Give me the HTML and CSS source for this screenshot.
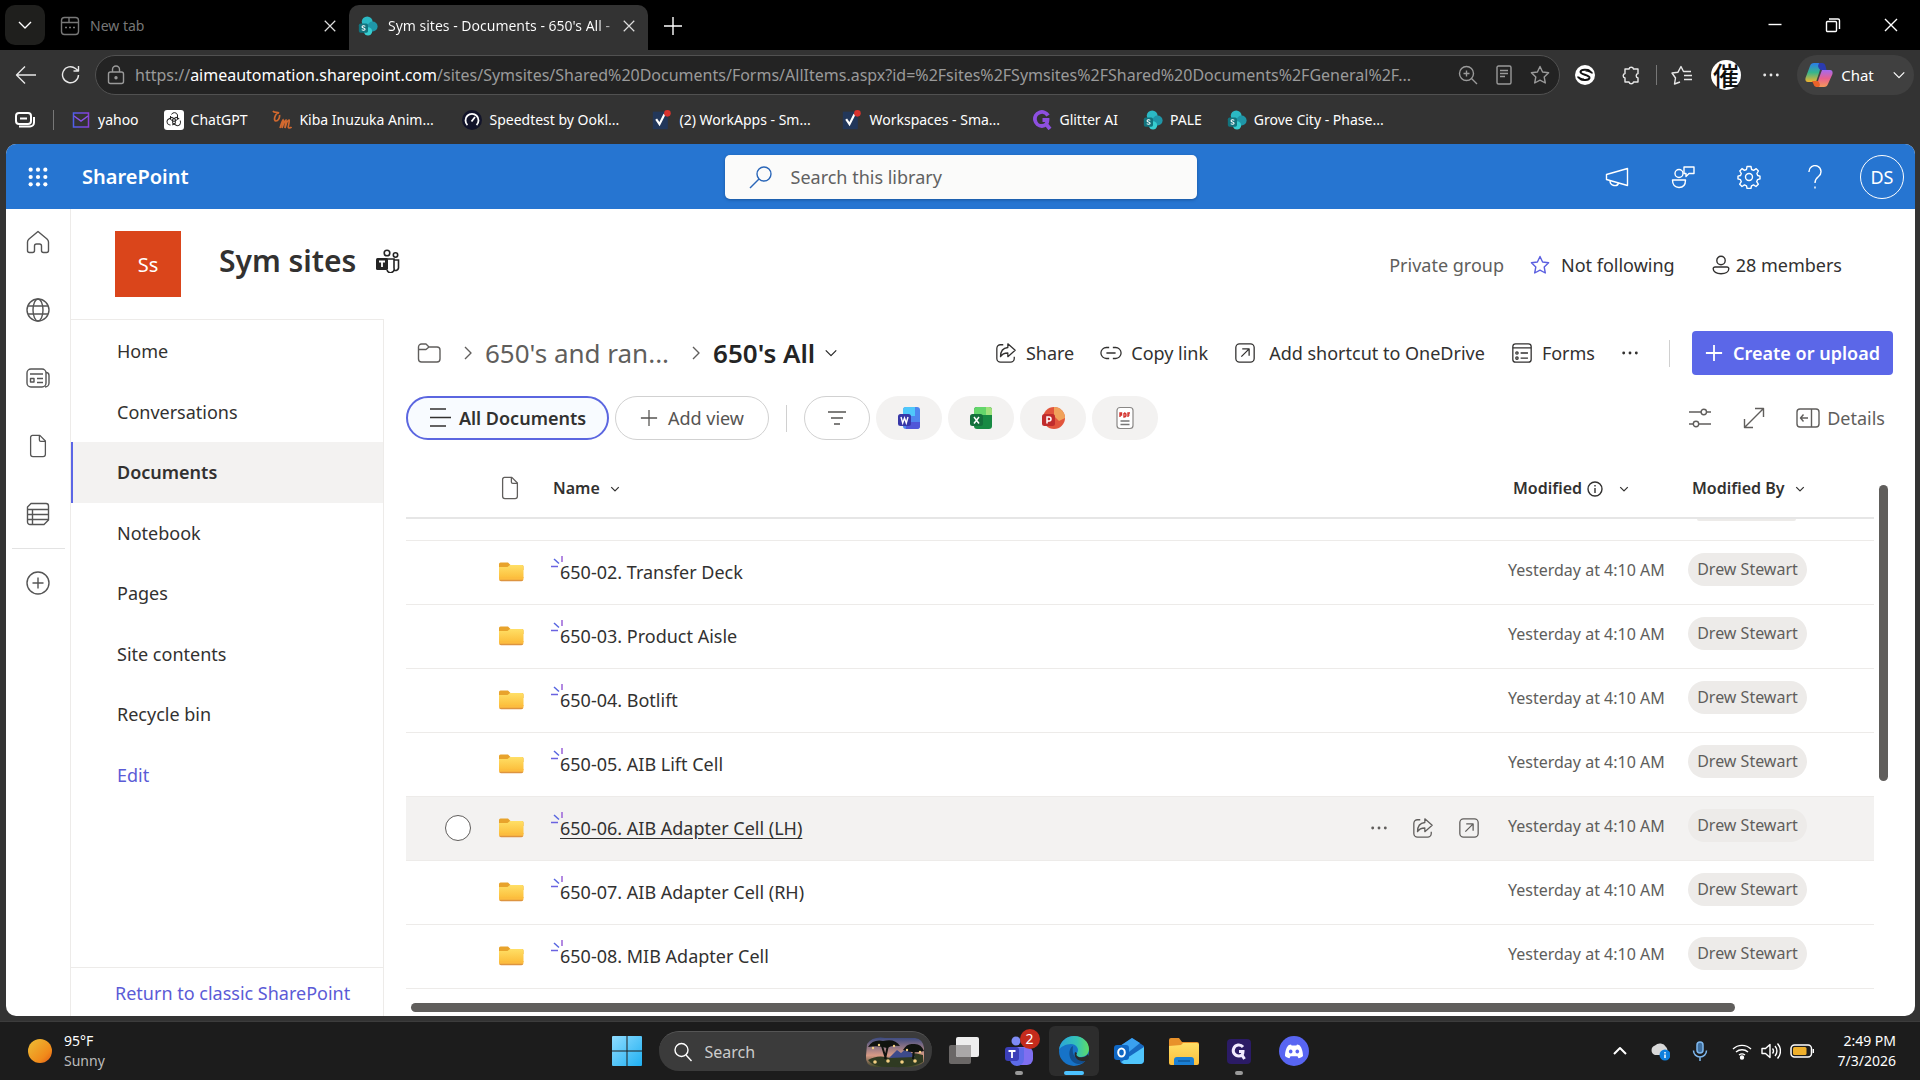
FILE: index.html
```html
<!DOCTYPE html>
<html lang="en">
<head>
<meta charset="utf-8">
<title>Sym sites - Documents - 650's All</title>
<link rel="stylesheet" href="styles.css">
</head>
<body>
<svg class="defs" aria-hidden="true">
  <defs>
    <linearGradient id="g-folder" x1="0" y1="0" x2="0" y2="1"><stop offset="0" stop-color="#ffdf66"/><stop offset="1" stop-color="#fcbf3c"/></linearGradient>
    <linearGradient id="g-sun" x1="0" y1="0" x2="1" y2="1"><stop offset="0.2" stop-color="#eeb02e"/><stop offset="0.7" stop-color="#f18a1a"/><stop offset="1" stop-color="#e0561a"/></linearGradient>
    <linearGradient id="g-win" x1="0" y1="0" x2="1" y2="1"><stop offset="0" stop-color="#8fdcff"/><stop offset="1" stop-color="#1fb0f2"/></linearGradient>
    <linearGradient id="g-edge" x1="0" y1="0" x2="1" y2="0"><stop offset="0" stop-color="#2aa5dc"/><stop offset="0.6" stop-color="#35c4b4"/><stop offset="1" stop-color="#5fdc66"/></linearGradient>
    <linearGradient id="g-cop1" x1="0" y1="0" x2="0" y2="1"><stop offset="0" stop-color="#2a7de8"/><stop offset="0.5" stop-color="#37b58c"/><stop offset="1" stop-color="#f2b32c"/></linearGradient>
    <linearGradient id="g-cop2" x1="0" y1="0" x2="0" y2="1"><stop offset="0" stop-color="#a46bf0"/><stop offset="0.5" stop-color="#e8608f"/><stop offset="1" stop-color="#f49a58"/></linearGradient>
    <linearGradient id="g-sky" x1="0" y1="0" x2="0" y2="1"><stop offset="0" stop-color="#3c4b82"/><stop offset="0.6" stop-color="#d79a86"/><stop offset="1" stop-color="#3b4426"/></linearGradient>
    <linearGradient id="g-mail" x1="0" y1="0" x2="1" y2="0"><stop offset="0" stop-color="#4f5fe8"/><stop offset="1" stop-color="#8a3fd8"/></linearGradient>
  </defs>
  <symbol id="i-down" viewBox="0 0 16 16"><path d="M2 5l6 6 6-6"/></symbol>
  <symbol id="i-right" viewBox="0 0 16 16"><path d="M5 2l6 6-6 6"/></symbol>
  <symbol id="i-x" viewBox="0 0 16 16"><path d="M2 2l12 12M14 2L2 14"/></symbol>
  <symbol id="i-plus" viewBox="0 0 20 20"><path d="M10 1v18M1 10h18"/></symbol>
  <symbol id="i-dots" viewBox="0 0 20 20"><g fill="currentColor" stroke="none"><circle cx="3" cy="10" r="1.6"/><circle cx="10" cy="10" r="1.6"/><circle cx="17" cy="10" r="1.6"/></g></symbol>
  <symbol id="i-star" viewBox="0 0 20 20"><path d="M10 1.500l2.600 5.500 6 .8-4.400 4.200 1.100 6L10 15.200l-5.300 2.800 1.100-6L1.400 7.800l6-.8z"/></symbol>
  <symbol id="i-share" viewBox="0 0 24 24"><path d="M9 3H6a4 4 0 0 0-4 4v11a4 4 0 0 0 4 4h11a4 4 0 0 0 4-4v-2"/><path d="M14 2l8 7-8 7v-4c-4 0-6.500 1.500-8 4 0-6 3-9.500 8-10z"/></symbol>
  <symbol id="i-shortcut" viewBox="0 0 24 24"><rect x="2" y="2" width="20" height="20" rx="4"/><path d="M8 16l8-8M9 7.500h7.500V15"/></symbol>
  <symbol id="i-file" viewBox="0 0 20 26"><path d="M4 1.500h8l6 6V22a2.500 2.500 0 0 1-2.500 2.500h-11A2.500 2.500 0 0 1 2 22V3.500a2 2 0 0 1 2-2z"/><path d="M11.500 2v4.500A1.500 1.500 0 0 0 13 8h5"/></symbol>
  <symbol id="i-sp" viewBox="0 0 24 24"><circle cx="11" cy="7" r="6.500" fill="#2bb9c4"/><circle cx="17.500" cy="12.500" r="6" fill="#1f96a8"/><circle cx="12" cy="18.500" r="5" fill="#37cdd0"/><rect x="1" y="9" width="11" height="11" rx="2" fill="#12737d"/><path d="M8.800 12.500c-1.500-1.200-4-.9-3.900.6.100 1.600 3.600 1 3.600 2.800 0 1.500-2.500 1.600-4 .5" stroke="#fff" stroke-width="1.300" fill="none"/></symbol>
  <symbol id="i-check" viewBox="0 0 22 24"><rect x="0" y="2" width="18" height="21" fill="#22375a"/><path d="M4 11l4 6 6-12" stroke="#fff" stroke-width="2.600" fill="none"/><circle cx="17.500" cy="4" r="4" fill="#d8322c"/></symbol>
  <symbol id="i-folder" viewBox="0 0 26 20"><path d="M1 2a1.500 1.500 0 0 1 1.500-1.500H10L12.500 3H24a1.500 1.500 0 0 1 1.500 1.500V8H1z" fill="#e8a32c"/><path d="M1 5h8.500L12 3h12a1.500 1.500 0 0 1 1.500 1.500V16H1z" fill="url(#g-folder)"/><path d="M1 15h24.500v2a2 2 0 0 1-2 2H3a2 2 0 0 1-2-2z" fill="#fcbd3f"/><path d="M1.300 17.800a2 2 0 0 0 1.700 1.500h20.500a2 2 0 0 0 1.700-1.500z" fill="#dd9440"/></symbol>
  <symbol id="i-new" viewBox="0 0 12 12"><path d="M11 0v6" stroke="#9a62d8"/><path d="M3 3l5 4.500" stroke="#5765e0"/><path d="M0 10.500h7" stroke="#6a63e0"/></symbol>
</svg>

<header class="tabstrip">
  <button class="tabmenu" aria-label="Tab actions"><svg class="ic s16"><use href="#i-down"/></svg></button>
  <div class="tab">
    <svg class="ic s20" viewBox="0 0 20 20"><rect x="1.500" y="1.500" width="17" height="17" rx="3"/><path d="M1.500 6.500H9V2M9 6.500h9.500"/><path d="M5 11.500h2M9 11.500h2M13 11.500h2"/></svg>
    <span class="tabname">New tab</span>
    <button class="tabclose" aria-label="Close tab"><svg class="ic s14"><use href="#i-x"/></svg></button>
  </div>
  <div class="tab active">
    <svg class="s20"><use href="#i-sp"/></svg>
    <span class="tabname">Sym sites - Documents - 650's All -</span>
    <button class="tabclose" aria-label="Close tab"><svg class="ic s14"><use href="#i-x"/></svg></button>
  </div>
  <button class="newtab" aria-label="New tab"><svg class="ic s20"><use href="#i-plus"/></svg></button>
  <div class="winbtns">
    <button aria-label="Minimize"><svg class="ic s16" viewBox="0 0 16 16"><path d="M1.500 7.500h13"/></svg></button>
    <button aria-label="Restore"><svg class="ic s16" viewBox="0 0 16 16"><rect x="1.500" y="4.500" width="10" height="10" rx="1"/><path d="M4 2h9a1.500 1.500 0 0 1 1.500 1.500V12"/></svg></button>
    <button aria-label="Close"><svg class="ic s16"><use href="#i-x"/></svg></button>
  </div>
</header>

<div class="toolbar">
  <button aria-label="Back"><svg class="ic s22" viewBox="0 0 22 22"><path d="M21 11H2M10 2.500L1.500 11l8.500 8.500"/></svg></button>
  <button aria-label="Refresh"><svg class="ic s20" viewBox="0 0 20 20"><path d="M17.500 10A8 8 0 1 1 14.500 3.500L17.500 6M17.500 1v5h-5"/></svg></button>
  <div class="address">
    <svg class="ic s20" viewBox="0 0 20 20"><rect x="2.500" y="7" width="15" height="11.500" rx="2"/><path d="M6.500 7V4.500a3.500 3.500 0 0 1 7 0V7"/><circle cx="10" cy="12.700" r="1" fill="currentColor"/></svg>
    <span class="url">https://<b>aimeautomation.sharepoint.com</b>/sites/Symsites/Shared%20Documents/Forms/AllItems.aspx?id=%2Fsites%2FSymsites%2FShared%20Documents%2FGeneral%2F...</span>
    <button aria-label="Zoom"><svg class="ic s20" viewBox="0 0 20 20"><circle cx="8.500" cy="8.500" r="7"/><path d="M13.500 13.500l5.500 5.500M8.500 5.500v6M5.500 8.500h6"/></svg></button>
    <button aria-label="Reader"><svg class="ic s20" viewBox="0 0 20 20"><rect x="3" y="1" width="14" height="18" rx="1.500"/><path d="M6 5.500h8M6 8.500h8M6 11.500h5"/></svg></button>
    <button aria-label="Favourite"><svg class="ic s20"><use href="#i-star"/></svg></button>
  </div>
  <button class="ext" aria-label="S extension"><svg class="s20" viewBox="0 0 20 20"><circle cx="10" cy="10" r="10" fill="#fff"/><path d="M15 6c-2-1.500-9-2-9.500.8C5 10 15 9.500 14.500 13c-.5 2.500-7 2.500-9.500 1M17 8.500c0-1-3-3-6.500-3M3 11.500c0 1 3 3 6 3" stroke="#111" stroke-width="2" fill="none"/></svg></button>
  <button class="puzzle" aria-label="Extensions"><svg class="ic s20" viewBox="0 0 20 20"><path d="M4 4h4a2.300 2.300 0 0 1 4.500 0H17v4.500a2.300 2.300 0 0 0 0 4.500V17h-4.500a2.300 2.300 0 0 1-4.500 0H4v-4a2.300 2.300 0 0 1 0-4.500z"/></svg></button>
  <span class="vsep"></span>
  <button class="favs" aria-label="Favourites"><svg class="ic s22" viewBox="0 0 22 20"><path d="M9 17l-5.500 2 1-6L1 8l6-.8L10 1.500l2.500 5H20M13 10.500h8M13 14.500h8"/></svg></button>
  <button class="profile" aria-label="Profile">催</button>
  <button class="more" aria-label="Menu"><svg class="ic s18"><use href="#i-dots"/></svg></button>
  <button class="chat"><svg class="s28" viewBox="0 0 28 26"><path d="M9 1h8l-3 10-3 9H3c-2 0-3-1.500-2.500-4L5 4c.6-2 2-3 4-3z" fill="url(#g-cop1)"/><path d="M14 1h3c2 0 3 1 3.500 3l1 4h-5c-2 0-3-2-3.500-4z" fill="#2b3bb0"/><path d="M19 25h-8l3-9 3-8h8c2 0 3 1.500 2.500 4L23 22c-.6 2-2 3-4 3z" fill="url(#g-cop2)"/><path d="M14 25h-2c-2 0-3-1-3.500-3L7 19h5c2 0 2.500 2 3 4z" fill="#e8622a"/></svg><span>Chat</span><svg class="ic s14"><use href="#i-down"/></svg></button>
</div>

<nav class="bookmarks" aria-label="Bookmarks">
  <button aria-label="Workspaces"><svg class="ic s20 thick" viewBox="0 0 20 20"><rect x="1" y="3" width="15" height="11" rx="3"/><path d="M5 8.500h7M4 16.500h11a4 4 0 0 0 4-4V7"/></svg></button>
  <span class="vsep"></span>
  <a href="#"><svg class="s20" viewBox="0 0 20 20"><rect x="2.500" y="3" width="15" height="14" fill="none" stroke="url(#g-mail)" stroke-width="1.500"/><path d="M3 6l7 5 7-5" fill="none" stroke="#8b52e8" stroke-width="1.500"/></svg>yahoo</a>
  <a href="#"><svg class="s20" viewBox="0 0 20 20"><rect width="20" height="20" rx="3" fill="#fff"/><g fill="none" stroke="#222" stroke-width="1"><path d="M7.500 4.500a3.200 3.200 0 0 1 6 .5v4.500l-3.500 2-3.500-2V6"/><path d="M7.500 4.500a3.200 3.200 0 0 1 6 .5v4.500l-3.500 2-3.500-2V6" transform="rotate(120 10 10)"/><path d="M7.500 4.500a3.200 3.200 0 0 1 6 .5v4.500l-3.500 2-3.500-2V6" transform="rotate(240 10 10)"/></g></svg>ChatGPT</a>
  <a href="#" class="long"><svg class="s20" viewBox="0 0 20 20"><path d="M1 1c1 2 4 1 6 2-4 0-6 8-3 8 2 0 4-3 3.500-6M8 18c1-3 2-7 3-8 1 2-.5 5-1 8 1-3 2.500-8 4-8 0 3-1 5-1 8 1-3 2-8 4-8 1 2-2 8 0 8 1 0 2 0 2.500-1" fill="none" stroke="#d2692f" stroke-width="1.700"/></svg>Kiba Inuzuka Anim...</a>
  <a href="#" class="long"><svg class="s20" viewBox="0 0 20 20"><circle cx="10" cy="10" r="10" fill="#12142a"/><path d="M5.500 15a6.500 6.500 0 1 1 9 0M9.500 11.500L13 7" fill="none" stroke="#fff" stroke-width="1.800"/></svg>Speedtest by Ookl...</a>
  <a href="#" class="long"><svg class="s20"><use href="#i-check"/></svg>(2) WorkApps - Sm...</a>
  <a href="#" class="long"><svg class="s20"><use href="#i-check"/></svg>Workspaces - Sma...</a>
  <a href="#"><svg class="s20" viewBox="0 0 20 20"><path d="M16 5.500A7 7 0 1 0 10 16c3 0 5.500-2 5.500-6h-5M14 14l4 5" fill="none" stroke="#8d4fe0" stroke-width="3.800"/></svg>Glitter AI</a>
  <a href="#"><svg class="s20"><use href="#i-sp"/></svg>PALE</a>
  <a href="#" class="long"><svg class="s20"><use href="#i-sp"/></svg>Grove City - Phase...</a>
</nav>

<div class="page">
  <div class="suite">
    <button class="waffle" aria-label="App launcher"><svg class="s22" viewBox="0 0 24 24" fill="#fff"><circle cx="4" cy="4" r="2.300"/><circle cx="12" cy="4" r="2.300"/><circle cx="20" cy="4" r="2.300"/><circle cx="4" cy="12" r="2.300"/><circle cx="12" cy="12" r="2.300"/><circle cx="20" cy="12" r="2.300"/><circle cx="4" cy="20" r="2.300"/><circle cx="12" cy="20" r="2.300"/><circle cx="20" cy="20" r="2.300"/></svg></button>
    <a class="brand" href="#">SharePoint</a>
    <label class="search"><svg class="ic s24" viewBox="0 0 24 24"><circle cx="15" cy="9" r="7"/><path d="M10 14L1 23"/></svg><input type="search" placeholder="Search this library" aria-label="Search this library"></label>
    <div class="suiteicons">
      <button aria-label="News"><svg class="ic s24" viewBox="0 0 24 24"><path d="M1.500 9.500L22.500 3.500v17l-21-6z"/><path d="M5 15.500c0 6 7.500 6.500 8.500 2.500"/></svg></button>
      <button aria-label="Feedback"><svg class="ic s24" viewBox="0 0 24 24"><circle cx="8" cy="8.500" r="4"/><path d="M1.500 15h13c0 5-2.500 7.500-6.500 7.500S1.500 20 1.500 15zM13 2h10v6.500h-5l-3 3v-3h-2z"/></svg></button>
      <button aria-label="Settings"><svg class="ic s24" viewBox="0 0 24 24"><circle cx="12" cy="12" r="3.500"/><path d="M10 1.500h4l.6 3 2 .8 2.600-1.700 2.200 2.400-1.500 2.500.8 2 2.300.7v2.700l-2.500.8-.8 2 1.600 2.500-2.300 2.300-2.500-1.600-2 .9-.6 2.700h-3.800l-.6-2.700-2-.9L5 21.500l-2.300-2.300 1.600-2.500-.8-2-2.500-.8v-2.700l2.500-.7.800-2L2.800 6 5 3.600l2.500 1.700 2-.8z"/></svg></button>
      <button aria-label="Help"><svg class="ic s24" viewBox="0 0 24 24"><path d="M6 7a6 6 0 1 1 9.500 4.500C13 13.500 12 14.500 12 18M12 21.500v2"/></svg></button>
      <button class="me">DS</button>
    </div>
  </div>

  <div class="body">
    <nav class="rail" aria-label="App bar">
      <a href="#" aria-label="Home"><svg class="ic s24" viewBox="0 0 24 24"><path d="M12 1.500L3 9c-1 1-1.500 2-1.500 3v8.500c0 1 .5 2 2 2h3c1 0 2-1 2-2V16c0-1 .5-2 2-2h3c1.500 0 2 1 2 2v4.500c0 1 1 2 2 2h3c1.500 0 2-1 2-2V12c0-1-.5-2-1.500-3z"/></svg></a>
      <a href="#" aria-label="Sites"><svg class="ic s24" viewBox="0 0 24 24"><circle cx="12" cy="12" r="11"/><ellipse cx="12" cy="12" rx="5" ry="11"/><path d="M2 8h20M2 16h20"/></svg></a>
      <a href="#" aria-label="News"><svg class="ic s24" viewBox="0 0 24 24"><rect x="1" y="3" width="19" height="18" rx="4"/><path d="M20 6.500c2 0 3 1 3 3V17a4 4 0 0 1-4 4M4 8h13M11 12.500h6M11 16.500h6"/><rect x="4.500" y="12.500" width="3.500" height="3.500"/></svg></a>
      <a href="#" aria-label="Files"><svg class="ic s24"><use href="#i-file"/></svg></a>
      <a href="#" aria-label="Lists"><svg class="ic s24" viewBox="0 0 24 24"><path d="M5 1.500h15a2.500 2.500 0 0 1 2.500 2.500v14l-4.500 4.500H4A2.500 2.500 0 0 1 1.500 20V5zM1.500 7.500h21M1.500 12.500h21M1.500 17.500h21M6.500 7.500v15"/></svg></a>
      <span class="railsep"></span>
      <a href="#" aria-label="Create"><svg class="ic s24" viewBox="0 0 24 24"><circle cx="12" cy="12" r="11"/><path d="M12 6.500v11M6.500 12h11"/></svg></a>
    </nav>

    <div class="site">
      <div class="sitehead">
        <span class="logo">Ss</span>
        <h1>Sym sites</h1>
        <svg class="teams" viewBox="0 0 24 24"><g fill="none" stroke="#242424" stroke-width="1.600"><circle cx="11" cy="4" r="2.800"/><circle cx="19.500" cy="6" r="2.200"/><path d="M10 10h8v9a3.500 3.500 0 0 1-7 2M18 11h4.500v8a3 3 0 0 1-4.500 2"/></g><rect x="0" y="9" width="12" height="12" rx="1.500" fill="#242424"/><path d="M3 12.500h6M6 12.500V18" stroke="#fff" stroke-width="1.800"/></svg>
        <div class="siteinfo">
          <span class="muted">Private group</span>
          <button class="follow"><svg class="ic s20"><use href="#i-star"/></svg>Not following</button>
          <a href="#" class="members"><svg class="ic s20" viewBox="0 0 20 20"><circle cx="10" cy="5.500" r="4.200"/><path d="M4 12h12a1.800 1.800 0 0 1 1.800 1.800c0 3-3.300 5-7.800 5s-7.800-2-7.800-5A1.800 1.800 0 0 1 4 12z"/></svg>28 members</a>
        </div>
      </div>

      <div class="columns">
        <nav class="sidenav" aria-label="Site">
          <div class="links">
            <a href="#">Home</a><a href="#">Conversations</a><a href="#" class="current">Documents</a><a href="#">Notebook</a><a href="#">Pages</a><a href="#">Site contents</a><a href="#">Recycle bin</a><a href="#" class="edit">Edit</a>
          </div>
          <a class="classic" href="#">Return to classic SharePoint</a>
        </nav>

        <main>
          <div class="cmdbar">
            <div class="crumbs">
              <a href="#" aria-label="Root"><svg class="ic s24" viewBox="0 0 24 24"><path d="M1.500 6A3 3 0 0 1 4.500 3H9l3 3h8a3 3 0 0 1 3 3v9a3 3 0 0 1-3 3H4.500a3 3 0 0 1-3-3zM1.500 8.500H9L12 6"/></svg></a>
              <svg class="ic s16"><use href="#i-right"/></svg>
              <a href="#" class="parent">650's and ran...</a>
              <svg class="ic s16"><use href="#i-right"/></svg>
              <button class="here">650's All<svg class="ic s14"><use href="#i-down"/></svg></button>
            </div>
            <div class="cmds">
              <button><svg class="ic s22"><use href="#i-share"/></svg>Share</button>
              <button><svg class="ic s22" viewBox="0 0 24 24"><path d="M10 6H7a6 6 0 0 0 0 12h3M14 6h3a6 6 0 0 1 0 12h-3M7 12h10"/></svg>Copy link</button>
              <button class="wide"><svg class="ic s22"><use href="#i-shortcut"/></svg>Add shortcut to OneDrive</button>
              <button><svg class="ic s22" viewBox="0 0 24 24"><rect x="2" y="2" width="20" height="20" rx="3"/><path d="M2 6.500h20M10.500 12h8M10.500 17.500h8"/><circle cx="6.500" cy="12" r="1.300"/><circle cx="6.500" cy="17.500" r="1.300"/></svg>Forms</button>
              <button aria-label="More"><svg class="ic s18"><use href="#i-dots"/></svg></button>
              <span class="rule"></span>
              <button class="create"><svg class="ic s18"><use href="#i-plus"/></svg>Create or upload</button>
            </div>
          </div>

          <div class="views">
            <button class="pill on"><svg class="ic s22" viewBox="0 0 22 22"><path d="M1 2h16M1 10.500h21M1 19h16"/></svg>All Documents</button>
            <button class="pill"><svg class="ic s18"><use href="#i-plus"/></svg>Add view</button>
            <span class="rule small"></span>
            <button class="chip outline" aria-label="Filter"><svg class="ic s20" viewBox="0 0 20 20"><path d="M1 4h18M4 10h12M7 16h6"/></svg></button>
            <button class="chip" aria-label="Word"><svg class="s24" viewBox="0 0 24 24"><rect x="6" y="1" width="17" height="22" rx="3" fill="#4f86ee"/><path d="M6 10V4a3 3 0 0 1 3-3h9v9z" fill="#4fc8fb"/><path d="M9 16h14v4a3 3 0 0 1-3 3H9z" fill="#5057d8"/><rect x="1" y="8" width="13" height="12" rx="2.500" fill="#3838a8"/><path d="M4 11l1.700 6 1.800-5 1.800 5L11 11" fill="none" stroke="#fff" stroke-width="1.400"/></svg></button>
            <button class="chip" aria-label="Excel"><svg class="s24" viewBox="0 0 24 24"><rect x="5" y="1" width="18" height="22" rx="3" fill="#178a43"/><path d="M5 9V4a3 3 0 0 1 3-3h9v8z" fill="#63d66b"/><path d="M17 1h3a3 3 0 0 1 3 3v5h-6z" fill="#9fe27c"/><rect x="1" y="8" width="13" height="12" rx="2.500" fill="#14703c"/><path d="M5 11l5 6.500M10 11l-5 6.500" stroke="#fff" stroke-width="1.500"/></svg></button>
            <button class="chip" aria-label="PowerPoint"><svg class="s24" viewBox="0 0 24 24"><circle cx="13" cy="12" r="11" fill="#e2553c"/><path d="M13 1a11 11 0 0 1 11 11l-6 3-5-5z" fill="#f0a25a"/><rect x="1" y="8" width="13" height="12" rx="2.500" fill="#c12c2c"/><path d="M6 17.500V11h2a2 2 0 0 1 0 4H6" fill="none" stroke="#fff" stroke-width="1.500"/></svg></button>
            <button class="chip" aria-label="PDF"><svg class="s24" viewBox="0 0 24 24"><path d="M7 1.500h10a3 3 0 0 1 3 3v15a3 3 0 0 1-3 3H7a3 3 0 0 1-3-3v-15a3 3 0 0 1 3-3z" fill="#fff" stroke="#8a8886" stroke-width="1.200"/><path d="M7 11V7h1.500v2H7M11 7v4c1.500 0 2-1 2-2s-.5-2-2-2M17 7h-2v4M15 9h1.500" fill="none" stroke="#d3322d" stroke-width="1.400"/><path d="M7.500 15h9M7.500 18.500h9" stroke="#777" stroke-width="1.300"/></svg></button>
            <div class="viewtools">
              <button aria-label="Display options"><svg class="ic s24" viewBox="0 0 24 24"><path d="M1 6h12M18.500 6H23M1 18h4M11 18h12"/><circle cx="15.800" cy="6" r="2.700"/><circle cx="8" cy="18" r="2.700"/></svg></button>
              <button aria-label="Expand"><svg class="ic s22" viewBox="0 0 22 22"><path d="M1.500 20.500l19-19M12 1.500h8.500V10M1.500 12v8.500H10"/></svg></button>
              <button><svg class="ic s24" viewBox="0 0 24 24"><rect x="1" y="3" width="22" height="18" rx="3"/><path d="M15.500 3v18M12 12H4.500M7.500 8.500L4.500 12l3 3.500"/></svg>Details</button>
            </div>
          </div>

          <div class="listwrap">
            <table>
              <colgroup><col class="c-sel"><col class="c-icon"><col><col class="c-mod"><col class="c-by"></colgroup>
              <thead><tr>
                <th></th>
                <th class="icon"><svg class="ic s24"><use href="#i-file"/></svg></th>
                <th>Name<svg class="ic s10"><use href="#i-down"/></svg></th>
                <th class="hmod">Modified<svg class="ic s16 info" viewBox="0 0 16 16"><circle cx="8" cy="8" r="7"/><path d="M8 7v5M8 4v1.500"/></svg><svg class="ic s10"><use href="#i-down"/></svg></th>
                <th class="hby">Modified By<svg class="ic s10"><use href="#i-down"/></svg></th>
              </tr></thead>
              <tbody>
                <tr class="partial"><td></td><td></td><td></td><td></td><td><span class="edge"></span></td></tr>
                <tr><td></td><td class="icon"><svg class="fold"><use href="#i-folder"/></svg></td><td><div class="name"><svg class="new"><use href="#i-new"/></svg><a href="#">650-02. Transfer Deck</a></div></td><td class="date">Yesterday at 4:10 AM</td><td><button class="person">Drew Stewart</button></td></tr>
                <tr><td></td><td class="icon"><svg class="fold"><use href="#i-folder"/></svg></td><td><div class="name"><svg class="new"><use href="#i-new"/></svg><a href="#">650-03. Product Aisle</a></div></td><td class="date">Yesterday at 4:10 AM</td><td><button class="person">Drew Stewart</button></td></tr>
                <tr><td></td><td class="icon"><svg class="fold"><use href="#i-folder"/></svg></td><td><div class="name"><svg class="new"><use href="#i-new"/></svg><a href="#">650-04. Botlift</a></div></td><td class="date">Yesterday at 4:10 AM</td><td><button class="person">Drew Stewart</button></td></tr>
                <tr><td></td><td class="icon"><svg class="fold"><use href="#i-folder"/></svg></td><td><div class="name"><svg class="new"><use href="#i-new"/></svg><a href="#">650-05. AIB Lift Cell</a></div></td><td class="date">Yesterday at 4:10 AM</td><td><button class="person">Drew Stewart</button></td></tr>
                <tr class="hover"><td class="sel"><input type="radio" aria-label="Select 650-06"></td><td class="icon"><svg class="fold"><use href="#i-folder"/></svg></td><td><div class="name"><svg class="new"><use href="#i-new"/></svg><a href="#">650-06. AIB Adapter Cell (LH)</a><span class="acts"><button aria-label="More"><svg class="ic s18"><use href="#i-dots"/></svg></button><button aria-label="Share"><svg class="ic s22"><use href="#i-share"/></svg></button><button aria-label="Add shortcut"><svg class="ic s22"><use href="#i-shortcut"/></svg></button></span></div></td><td class="date">Yesterday at 4:10 AM</td><td><button class="person">Drew Stewart</button></td></tr>
                <tr><td></td><td class="icon"><svg class="fold"><use href="#i-folder"/></svg></td><td><div class="name"><svg class="new"><use href="#i-new"/></svg><a href="#">650-07. AIB Adapter Cell (RH)</a></div></td><td class="date">Yesterday at 4:10 AM</td><td><button class="person">Drew Stewart</button></td></tr>
                <tr><td></td><td class="icon"><svg class="fold"><use href="#i-folder"/></svg></td><td><div class="name"><svg class="new"><use href="#i-new"/></svg><a href="#">650-08. MIB Adapter Cell</a></div></td><td class="date">Yesterday at 4:10 AM</td><td><button class="person">Drew Stewart</button></td></tr>
              </tbody>
            </table>
            <div class="vtrack"><span class="vthumb"></span></div>
          </div>
          <div class="htrack"><span class="hthumb"></span></div>
        </main>
      </div>
    </div>
  </div>
</div>

<footer class="taskbar">
  <button class="weather">
    <svg class="s24" viewBox="0 0 24 24"><circle cx="12" cy="12" r="12" fill="url(#g-sun)"/></svg>
    <span>95°F<small>Sunny</small></span>
  </button>
  <div class="apps">
    <button aria-label="Start"><svg class="s30" viewBox="0 0 30 30" fill="url(#g-win)"><path d="M0 1a1 1 0 0 1 1-1h13.500v14.500H0zM15.500 0H29a1 1 0 0 1 1 1v13.500H15.500zM0 15.500h14.500V30H1a1 1 0 0 1-1-1zM15.500 15.500H30V29a1 1 0 0 1-1 1H15.500z"/></svg></button>
    <label class="tsearch"><svg class="ic s20" viewBox="0 0 20 20"><circle cx="8.500" cy="8" r="6.500"/><path d="M13 13l5.500 6"/></svg><input type="search" placeholder="Search" aria-label="Search"><svg class="scene" viewBox="0 0 60 32"><path d="M2 8Q8 0 20 2h30q8 1 9 10v14q-6 6-20 5H10Q0 30 1 20z" fill="url(#g-sky)"/><path d="M3 24q10-6 22-2 16-8 33-3v7q-10 6-30 5Q8 32 3 24z" fill="#2f3a22"/><path d="M24 22l8-8 4 3 6-5 8 9z" fill="#3d4a8a"/><path d="M3 11q5-8 15-6 12-3 17 5-8-1-13 2-9-3-19-1zM38 14q4-7 10-6 8-1 11 7-10 3-21-1z" fill="#10130f"/><path d="M17 10l4 13M23 9l-3 14M49 13l-1 10" stroke="#10130f" stroke-width="2"/><g fill="#f4cf82"><circle cx="8" cy="12" r="1.200"/><circle cx="14" cy="9" r="1.200"/><circle cx="29" cy="10" r="1.200"/><circle cx="42" cy="14" r="1.200"/><circle cx="55" cy="16" r="1.200"/><circle cx="10" cy="26" r="1.800"/><circle cx="23" cy="25" r="1.800"/><circle cx="37" cy="26" r="1.800"/><circle cx="50" cy="25" r="1.800"/></g></svg></label>
    <button aria-label="Task view"><svg class="s30" viewBox="0 0 30 30"><rect x="0" y="9" width="22" height="19" rx="2" fill="#6a6766"/><rect x="7" y="1" width="23" height="20" rx="2" fill="#eee"/><path d="M7 9h15v12H9a2 2 0 0 1-2-2z" fill="#aaa8a8"/></svg></button>
    <button class="run" aria-label="Teams"><svg class="s30" viewBox="0 0 30 30"><circle cx="12" cy="5" r="4.500" fill="#7f8cf5"/><path d="M9 11h14a6 6 0 0 1 6 6v6a6 6 0 0 1-6 6H12z" fill="#7f6ff0"/><path d="M5 12h15v11a7 7 0 0 1-14 0z" fill="#5d6be8"/><rect x="1" y="11" width="14" height="14" rx="3" fill="#3b3fb8"/><path d="M4.500 15h7M8 15v7" stroke="#fff" stroke-width="1.800"/></svg><span class="badge">2</span></button>
    <button class="run front" aria-label="Edge"><svg class="s30" viewBox="0 0 30 30"><circle cx="15" cy="15" r="15" fill="#1673c8"/><path d="M0 14C1 5 8 0 15 0c9 0 15 6 15 13 0 5-4 8-8 8s-6-2-4-4c3-4-1-9-6-9C7 8 1 11 0 14z" fill="url(#g-edge)"/><path d="M14 10c-5 2-6 16 5 18 4 0 7-2 9-5-8 3-16-1-14-13z" fill="#124f8f"/><path d="M18 17c-2 3 2 5 6 4 2 0 4-2 5-3l1 5-3 2c-7 1-13-3-11-9z" fill="#2a2a2a"/></svg></button>
    <button aria-label="Outlook"><svg class="s30" viewBox="0 0 30 30"><path d="M6 10L18 2l12 8v14a4 4 0 0 1-4 4H10a4 4 0 0 1-4-4z" fill="#1769c0"/><path d="M6 10L18 2l8 5-16 13H6z" fill="#3aa0f0"/><path d="M30 11v13a4 4 0 0 1-4 4H10l-3-2z" fill="#50c5fb"/><rect x="0" y="9" width="15" height="15" rx="3" fill="#0f67c4"/><ellipse cx="7.500" cy="16.500" rx="3.300" ry="4" fill="none" stroke="#fff" stroke-width="2"/></svg></button>
    <button aria-label="File Explorer"><svg class="s30" viewBox="0 0 30 30"><path d="M0 4a2 2 0 0 1 2-2h8l3 4h15a2 2 0 0 1 2 2v4H0z" fill="#e8912a"/><path d="M0 10l12-1 2-2h14a2 2 0 0 1 2 2v18a2 2 0 0 1-2 2H2a2 2 0 0 1-2-2z" fill="url(#g-folder)"/><path d="M5 29v-5a3 3 0 0 1 3-3h14a3 3 0 0 1 3 3v5z" fill="#1a7fd4"/><path d="M9 25h12" stroke="#115a9c" stroke-width="1.500"/></svg></button>
    <button class="run" aria-label="Glitter"><svg class="s30" viewBox="0 0 30 30"><rect x="3" y="3" width="24" height="25" rx="4" fill="#2b1b66"/><path d="M19 11a5.500 5.500 0 1 0-4 9c3 0 4-2 4-4.500h-4M18 19l2.500 4" fill="none" stroke="#f1eaff" stroke-width="3"/></svg></button>
    <button aria-label="Discord"><svg class="s30" viewBox="0 0 30 30"><circle cx="15" cy="15" r="15" fill="#5865f2"/><path d="M10 9l2-.6.6 1.200h4.800L18 8.400l2 .6c2 1 4 6 4 11-1.500 1.500-3 2-4.500 2.200l-1-2h-7l-1 2C9 22 7.500 21.500 6 20c0-5 2-10 4-11z" fill="#fff"/><ellipse cx="11.700" cy="15.500" rx="1.800" ry="2" fill="#5865f2"/><ellipse cx="18.300" cy="15.500" rx="1.800" ry="2" fill="#5865f2"/></svg></button>
  </div>
  <div class="tray">
    <button aria-label="Hidden icons"><svg class="ic s16 thick" viewBox="0 0 16 16"><path d="M2 11l6-6 6 6"/></svg></button>
    <button aria-label="OneDrive"><svg class="s20" viewBox="0 0 20 20"><path d="M5 14a5 5 0 0 1 0-9.500A7 7 0 0 1 16 6c2 2 2 6 0 8z" fill="#d8d8d8"/><circle cx="15" cy="14" r="5.500" fill="#0f7fdc"/><path d="M15 13.500V17M15 11v1.500" stroke="#fff" stroke-width="1.500"/></svg></button>
    <button aria-label="Microphone"><svg class="s20" viewBox="0 0 20 20" fill="none" stroke="#7fb8ee" stroke-width="1.500"><rect x="7" y="1" width="6" height="11" rx="3" fill="#3f6f9f"/><path d="M3.500 9.500a6.500 6.500 0 0 0 13 0M10 16v4"/></svg></button>
    <button class="net" aria-label="Network, sound and battery"><svg class="ic s20" viewBox="0 0 20 20"><path d="M1 8a13 13 0 0 1 18 0M4 11a9 9 0 0 1 12 0M7 14a5 5 0 0 1 6 0"/><circle cx="10" cy="16.500" r="1.500" fill="currentColor"/></svg><svg class="ic s20" viewBox="0 0 20 20"><path d="M1 7.500h3.500L9 3.500v13l-4.500-4H1zM11.500 7.500a4 4 0 0 1 0 5M14 5a7.500 7.500 0 0 1 0 10M16.500 2.500a11 11 0 0 1 0 15"/></svg><svg class="s24" viewBox="0 0 24 24"><rect x="1" y="6" width="20.500" height="12" rx="3.500" fill="none" stroke="#fff" stroke-width="1.500"/><rect x="3" y="8" width="13.500" height="8" rx="1.500" fill="#efb02c"/><path d="M23.300 10v4" stroke="#fff" stroke-width="1.400"/></svg></button>
    <button class="clock"><span>2:49 PM</span><span>7/3/2026</span></button>
  </div>
</footer>
</body>
</html>
```
FILE: styles.css
```css
* { box-sizing: border-box; }
body {
  margin: 0;
  min-height: 100vh;
  display: flex;
  flex-direction: column;
  background: #333;
  color: #323130;
  font: 18px/24px "Noto Sans", "Open Sans", sans-serif;
}
button, input { font: inherit; color: inherit; margin: 0; }
button { border: 0; background: none; padding: 0; display: inline-flex; align-items: center; justify-content: center; white-space: nowrap; }
a { color: inherit; text-decoration: none; white-space: nowrap; }
svg { flex: none; display: block; }
.defs { position: absolute; width: 0; height: 0; }
.ic { fill: none; stroke: currentColor; stroke-width: 1.4; stroke-linejoin: round; }
.thick { stroke-width: 2; }
.s10 { width: 10px; height: 10px; }
.s14 { width: 14px; height: 14px; }
.s16 { width: 16px; height: 16px; }
.s18 { width: 18px; height: 18px; }
.s20 { width: 20px; height: 20px; }
.s22 { width: 22px; height: 22px; }
.s24 { width: 24px; height: 24px; }
.s28 { width: 28px; height: 28px; }
.s30 { width: 30px; height: 30px; }

/* Browser: tabs */
.tabstrip { display: flex; height: 50px; background: #000; color: #fff; padding: 5px 0 0 5px; font-size: 14px; }
.tabmenu { width: 40px; height: 40px; border-radius: 10px; background: #1f1f1d; }
.tab { display: flex; align-items: center; width: 304px; padding: 0 10px 4px 15px; color: #777; }
.tab.active { width: 299px; padding: 0 10px 4px 9px; background: #333; color: #fff; border-radius: 10px 10px 0 0; }
.tabname { flex: 1; margin-left: 10px; overflow: hidden; white-space: nowrap; }
.active .tabname { background: linear-gradient(90deg, #fff 90%, #555 100%); background-clip: text; color: transparent; }
.tabclose { width: 18px; height: 20px; color: #ddd; }
.newtab { width: 50px; padding-bottom: 4px; }
.winbtns { margin-left: auto; display: flex; }
.winbtns button { width: 58px; height: 40px; }

/* Browser: address */
.toolbar { display: flex; align-items: center; height: 50px; color: #e8e8e8; padding-right: 6px; }
.toolbar > button { width: 45px; height: 40px; }
.toolbar > button:first-child { margin-left: 3px; }
.address { flex: 1; min-width: 0; display: flex; align-items: center; height: 40px; margin: 0 4px 0 2px; padding: 0 1px 0 10px; border: 1px solid #515151; border-radius: 20px; background: #232323; color: #9a9a9a; }
.url { flex: 1; min-width: 0; margin-left: 9px; overflow: hidden; white-space: nowrap; font-size: 16px; }
.url b { font-weight: 400; color: #fff; }
.address button { width: 36px; height: 36px; }
.vsep { width: 1px; height: 20px; background: #777; }
.toolbar > .ext { width: 42px; }
.toolbar > .puzzle, .toolbar > .favs { width: 50px; }
.toolbar > .more { width: 52px; }
.toolbar > .profile { width: 30px; height: 30px; margin: 0 4px; border-radius: 50%; background: #fff; color: #111; font: 500 26px/30px "Noto Sans CJK JP", sans-serif; }
.toolbar > .chat { width: 117px; height: 40px; border-radius: 20px; background: #404040; font-size: 15px; gap: 8px; color: #fff; }
.chat .ic { margin-left: 10px; }

/* Browser: bookmarks */
.bookmarks { display: flex; align-items: center; height: 44px; padding: 0 0 4px 15px; color: #fff; font-size: 14px; }
.bookmarks > .vsep { margin: 0 17px 0 18px; }
.bookmarks a { display: flex; align-items: center; gap: 7px; padding-right: 25px; }
.bookmarks .long { width: 190px; padding-right: 0; }

/* SharePoint page */
.page { flex: 1; display: flex; flex-direction: column; margin: 0 5px 5px 6px; border-radius: 10px; background: #fff; overflow: hidden; }
.suite { display: grid; grid-template-columns: 1fr 472px 1fr; align-items: center; height: 65px; background: #2675d1; color: #fff; }
.suite .waffle { grid-column: 1; grid-row: 1; width: 24px; justify-self: start; margin-left: 20px; }
.brand { grid-column: 1; grid-row: 1; margin-left: 76px; font-size: 20px; font-weight: 600; }
.search { grid-column: 2; display: flex; align-items: center; height: 44px; padding-left: 24px; gap: 18px; border-radius: 5px; background: #fbfbfa; color: #2a66b8; box-shadow: 0 1px 3px #1a559c; }
input[type="search"] { border: 0; outline: 0; background: none; min-width: 0; flex: 1; padding: 0; }
.search input { color: #323130; }
input::placeholder { color: #616161; opacity: 1; }
.suiteicons { grid-column: 3; display: flex; justify-content: flex-end; align-items: center; padding-right: 11px; }
.suiteicons button { width: 66px; }
.suiteicons .me { width: 44px; height: 44px; margin-left: 12px; border: 1px solid #fff; border-radius: 50%; }

.body { flex: 1; display: flex; }
.rail { width: 65px; border-right: 1px solid #edebe9; display: flex; flex-direction: column; align-items: center; padding-top: 21px; gap: 44px; color: #555; }
.railsep { width: 53px; height: 1px; margin: -22px 0; background: #e3e3e3; }
.site { flex: 1; min-width: 0; display: flex; flex-direction: column; }
.sitehead { display: flex; height: 110px; padding: 22px 73px 0 44px; }
.logo { width: 66px; height: 66px; background: #da451b; color: #fff; font-size: 20px; line-height: 68px; text-align: center; }
h1 { margin: 0 0 0 38px; font-size: 30px; line-height: 60px; font-weight: 600; }
.teams { width: 24px; height: 24px; margin: 18px 0 0 20px; }
.siteinfo { margin-left: auto; display: flex; align-items: center; height: 68px; }
.muted { color: #605e5c; }
.follow svg { color: #5b5fe0; margin-right: 11px; }
.follow { margin: 0 36px 0 26px; }
.members { display: flex; align-items: center; gap: 5px; }

.columns { flex: 1; display: flex; }
.sidenav { width: 313px; flex: none; border: 1px solid #edebe9; border-width: 1px 1px 0 0; display: flex; flex-direction: column; }
.links { display: grid; grid-template-rows: repeat(8, 1fr); height: 484px; margin-top: 1px; }
.links a { display: flex; align-items: center; padding-left: 46px; }
.links .current { padding-left: 44px; border-left: 2px solid #5b66e6; background: #f3f2f1; font-weight: 600; }
.links .edit, .classic { color: #5b5bd6; }
.classic { margin-top: auto; height: 49px; padding-left: 44px; border-top: 1px solid #edebe9; line-height: 50px; }

main { flex: 1; min-width: 0; padding: 12px 22px 0 22px; }
.cmdbar { display: flex; align-items: center; height: 44px; }
.crumbs { display: flex; align-items: center; gap: 9px; color: #605e5c; margin-left: 11px; }
.crumbs > svg { margin-left: 10px; }
.parent { font-size: 26px; }
.here { font-size: 26px; font-weight: 600; color: #242424; gap: 9px; }
.cmds { margin-left: auto; display: flex; align-items: center; }
.cmds button { gap: 9px; margin-right: 26px; }
.cmds .wide { gap: 13px; }
.rule { width: 1px; height: 27px; background: #d0d0d0; margin: 0 22px 0 4px; }
.cmds .create { width: 201px; height: 44px; gap: 10px; margin: 0; border-radius: 4px; background: #5b67e8; color: #fff; font-weight: 600; }
.create .ic { stroke-width: 2; }
.views { display: flex; align-items: center; height: 44px; margin-top: 21px; }
.pill { width: 154px; height: 44px; border: 1px solid #d1d1d1; border-radius: 22px; gap: 10px; color: #565452; }
.pill.on { width: 203px; margin-right: 6px; border: 2px solid #5b66e0; background: #f8fbff; color: #323130; font-weight: 600; gap: 8px; }
.rule.small { margin: 0 17px; }
.chip { width: 66px; height: 44px; margin-right: 6px; border-radius: 22px; background: #f3f2f1; color: #565452; }
.chip.outline { border: 1px solid #d1d1d1; background: #fff; }
.viewtools { margin-left: auto; display: flex; align-items: center; gap: 31px; padding-right: 8px; color: #605e5c; }
.viewtools button { gap: 7px; }

.listwrap { display: flex; margin-top: 18px; }
table { flex: 1; border-collapse: collapse; table-layout: fixed; width: 100%; }
.c-sel { width: 77px; }
.c-icon { width: 55px; }
.c-mod { width: 179px; }
.c-by { width: 187px; }
th, td { padding: 0; text-align: left; height: 64px; border-bottom: 1px solid #edebe9; }
th { height: 60px; border-bottom: 2px solid #e6e6e6; font-size: 16px; font-weight: 600; white-space: nowrap; }
th svg { display: inline-block; vertical-align: middle; margin-left: 10px; }
th .s10 { stroke-width: 2; }
th:nth-child(3) { padding-left: 15px; }
.icon svg { display: block; margin: 0 0 0 15px; color: #605e5c; }
.hmod, .hby { padding-left: 5px; }
th .info { margin: 0 6px 0 5px; }
.partial td { height: 22px; vertical-align: top; }
.edge { display: block; width: 99px; height: 2px; margin-left: 10px; background: #edebe9; border-radius: 0 0 20px 20px; }
.icon .fold { width: 26px; height: 20px; }
.name { display: flex; align-items: center; margin-left: 13px; }
.new { width: 12px; height: 12px; margin: 0 -3px 20px 0; stroke-width: 1.5; }
.date, .person { font-size: 16px; color: #605e5c; }
.date { white-space: nowrap; padding-bottom: 4px; }
td .person { height: 33px; width: 119px; margin: 0 0 6px 1px; border-radius: 17px; background: #edebe9; display: flex; }
.hover td { background: #f3f2f1; }
.hover .name a { text-decoration: underline; text-underline-offset: 3px; }
.sel input { appearance: none; display: block; width: 26px; height: 26px; margin: 0 0 0 39px; border: 1px solid #605e5c; border-radius: 50%; background: #fff; }
.acts { margin-left: auto; display: flex; gap: 24px; padding-right: 28px; color: #605e5c; }
.vtrack { width: 19px; padding: 27px 0 0 5px; }
.vthumb { display: block; width: 9px; height: 296px; border-radius: 5px; background: #605e5c; }
.htrack { padding: 14px 158px 4px 5px; }
.hthumb { display: block; height: 9px; border-radius: 5px; background: #605e5c; }

/* Taskbar */
.taskbar { display: grid; grid-template-columns: 1fr auto 1fr; align-items: center; height: 59px; background: #1c1c1c; border-top: 1px solid #3c3c3c; color: #fff; font-size: 14px; line-height: 20px; }
.weather { justify-self: start; margin-left: 28px; gap: 12px; text-align: left; }
.weather small { display: block; font-size: 14px; color: #bbb; }
.apps { display: flex; align-items: center; gap: 5px; }
.apps button { position: relative; width: 50px; height: 50px; border-radius: 6px; }
.tsearch { display: flex; align-items: center; width: 273px; height: 40px; margin: 0 2px; padding: 0 7px 0 14px; gap: 12px; border-radius: 20px; background: #3b3b3b; border-top: 1px solid #555; font-size: 16px; }
.tsearch input::placeholder { color: #ccc; }
.scene { width: 60px; height: 32px; }
.front { background: #2d2d2d; }
.run::after { content: ""; position: absolute; bottom: 1px; left: 21px; width: 8px; height: 4px; border-radius: 2px; background: #999; }
.front::after { left: 15px; width: 20px; background: #4cc2ff; }
.badge { position: absolute; top: 3px; right: 4px; width: 20px; height: 20px; border-radius: 50%; background: #c42b1c; font-size: 14px; line-height: 20px; }
.tray { justify-self: end; display: flex; align-items: center; padding-right: 24px; }
.tray button { width: 40px; height: 40px; }
.tray .net { width: 98px; gap: 9px; margin-left: 4px; }
.tray .clock { width: 66px; margin-left: 8px; flex-direction: column; align-items: flex-end; }
```
